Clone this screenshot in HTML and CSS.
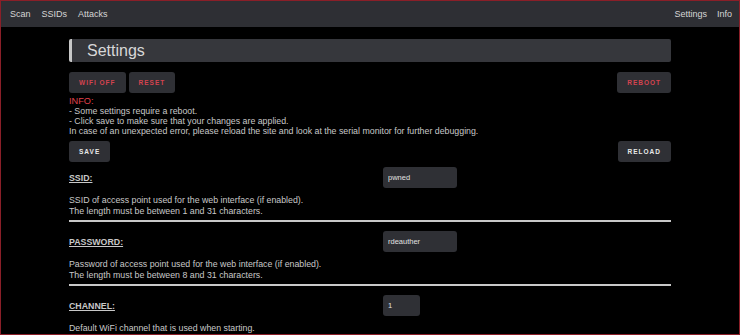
FILE: index.html
```html
<!DOCTYPE html>
<html>
<head>
<meta charset="utf-8">
<link rel="stylesheet" href="styles.css">
</head>
<body>
<div class="frame">
  <nav class="nav">
    <div class="nav-left"><a>Scan</a><a>SSIDs</a><a>Attacks</a></div>
    <div class="nav-right"><a>Settings</a><a>Info</a></div>
  </nav>
  <main class="container">
    <h1 class="title">Settings</h1>
    <div class="btn-row">
      <div class="group"><button class="btn red">WIFI OFF</button><button class="btn red">RESET</button></div>
      <button class="btn red">REBOOT</button>
    </div>
    <div class="info">
      <span class="red-text">INFO:</span><br>
      - Some settings require a reboot.<br>
      - Click save to make sure that your changes are applied.<br>
      In case of an unexpected error, please reload the site and look at the serial monitor for further debugging.
    </div>
    <div class="btn-row save-row">
      <button class="btn">SAVE</button>
      <button class="btn">RELOAD</button>
    </div>
    <section class="setting first">
      <div class="setting-head"><label class="label">SSID:</label><input class="input" value="pwned"></div>
      <p class="desc">SSID of access point used for the web interface (if enabled).<br>The length must be between 1 and 31 characters.</p>
    </section>
    <hr class="sep">
    <section class="setting">
      <div class="setting-head"><label class="label">PASSWORD:</label><input class="input" value="rdeauther"></div>
      <p class="desc">Password of access point used for the web interface (if enabled).<br>The length must be between 8 and 31 characters.</p>
    </section>
    <hr class="sep">
    <section class="setting">
      <div class="setting-head"><label class="label">CHANNEL:</label><input class="input small" value="1"></div>
      <p class="desc">Default WiFi channel that is used when starting.</p>
    </section>
  </main>
</div>
</body>
</html>
```
FILE: styles.css
```css
* { box-sizing: border-box; }
html, body { margin: 0; padding: 0; background: #000; }
body { font-family: "Liberation Sans", Arial, sans-serif; color: #c9c9c9; }
.frame {
  width: 740px; height: 335px; overflow: hidden;
  border: 1px solid #8a1f28;
  background: #000;
}
.nav {
  height: 26px; background: #2e2f34;
  display: flex; justify-content: space-between; align-items: center;
  padding: 0 7px 0 9px; font-size: 9px;
}
.nav a { color: #d6d6d6; margin-right: 11px; }
.nav-right a { margin-right: 0; margin-left: 10px; }
.container { width: 602px; margin: 12px auto 0 68px; }
.title {
  margin: 0; height: 23px; background: #36373c;
  border-left: 3px solid #c8c8c8; border-radius: 2px;
  font-size: 16px; font-weight: normal; color: #d8d8d8;
  padding-left: 15px; line-height: 23px;
}
.btn-row { display: flex; justify-content: space-between; margin-top: 10px; }
.group { display: flex; gap: 3px; }
.btn {
  height: 21px; background: #2f3035; border: 0; border-radius: 3px;
  font-family: "Liberation Sans", Arial, sans-serif;
  font-size: 6.5px; font-weight: bold; letter-spacing: 1px;
  color: #e8e8e8; padding: 0 10px;
}
.btn.red { color: #d4434f; }
.info { font-size: 8.8px; line-height: 10px; margin-top: 3px; color: #c8c8c8; }
.red-text { color: #e0404c; font-size: 9.2px; }
.save-row { margin-top: 5px; }
.setting { margin-top: 9px; }
.setting.first { margin-top: 5px; }
.setting-head { display: grid; grid-template-columns: 314px 1fr; align-items: center; height: 21px; }
.label { font-size: 8.8px; font-weight: bold; text-decoration: underline; color: #c8c8c8; }
.input {
  width: 74px; height: 21px; background: #2f3035; border: 0; border-radius: 3px;
  color: #e0e0e0; font-family: "Liberation Sans", Arial, sans-serif; font-size: 7.5px;
  padding: 0 5px; outline: none;
}
.input.small { width: 37px; }
.desc { margin: 7px 0 0; font-size: 8.8px; line-height: 11px; }
.sep { margin: 3px 0 0; border: 0; height: 2px; background: #c8c8c8; }
```
